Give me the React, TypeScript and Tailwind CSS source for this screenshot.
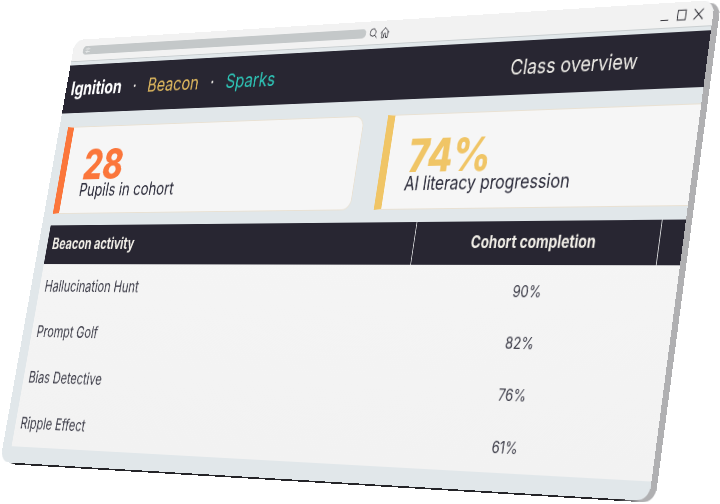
import { useLayoutEffect, useRef, useState } from "react";

type Point = [number, number];

// Corners of the tilted screen, clockwise from the top left, on a stage 720 units wide.
const STAGE_WIDTH = 720;
const FACE: Point[] = [
  [75, 40],
  [715, 0],
  [649, 501],
  [0, 462],
];
const DEPTH: Point = [6, 2];

// Projects a width x height box onto four corners.
function project(width: number, height: number, corners: Point[]): string {
  const [[x0, y0], [x1, y1], [x2, y2], [x3, y3]] = corners;
  const dx1 = x1 - x2;
  const dx2 = x3 - x2;
  const dx3 = x0 - x1 + x2 - x3;
  const dy1 = y1 - y2;
  const dy2 = y3 - y2;
  const dy3 = y0 - y1 + y2 - y3;
  const det = dx1 * dy2 - dx2 * dy1;
  const g = (dx3 * dy2 - dx2 * dy3) / det;
  const h = (dx1 * dy3 - dx3 * dy1) / det;
  const m = [
    (x1 - x0 + g * x1) / width, (y1 - y0 + g * y1) / width, 0, g / width,
    (x3 - x0 + h * x3) / height, (y3 - y0 + h * y3) / height, 0, h / height,
    0, 0, 1, 0,
    x0, y0, 0, 1,
  ];
  return `matrix3d(${m.map((n) => n.toFixed(8)).join(",")})`;
}

const stats = [
  { value: "28", label: "Pupils in cohort", accent: "border-l-[#fb763b]", color: "text-[#fb763b]" },
  { value: "74%", label: "AI literacy progression", accent: "border-l-[#f0c566]", color: "text-[#f0c566]" },
];

const activities = [
  { name: "Hallucination Hunt", completion: "90%" },
  { name: "Prompt Golf", completion: "82%" },
  { name: "Bias Detective", completion: "76%" },
  { name: "Ripple Effect", completion: "61%" },
];

const iconProps = {
  viewBox: "0 0 12 12",
  fill: "none",
  stroke: "currentColor",
  strokeLinecap: "round",
  strokeLinejoin: "round",
  "aria-hidden": true,
} as const;

function Toolbar() {
  return (
    <div className="flex h-[26px] items-center border-b border-[#c9ced0] bg-[#f2f2f2] pr-[11px] pl-4 text-[#33333a]">
      <label className="flex h-[10px] w-[424px] items-center rounded-full bg-[#c4c8c9] pl-1 text-[#eef0f0]">
        <svg {...iconProps} className="size-2">
          <path d="M1 3.5h4M8 3.5h3M1 8.5h2M6 8.5h5" />
          <circle cx="6.5" cy="3.5" r="1.3" />
          <circle cx="4.5" cy="8.5" r="1.3" />
        </svg>
        <input aria-label="Address" className="h-2 min-w-0 grow bg-transparent px-1 text-[8px] outline-none" />
      </label>
      <div className="flex items-center gap-1 pl-1">
        <button type="button" aria-label="Search">
          <svg {...iconProps} className="size-3">
            <circle cx="5.5" cy="5.2" r="4" />
            <path d="M8.4 8.2 11 11" />
          </svg>
        </button>
        <button type="button" aria-label="Home">
          <svg {...iconProps} className="size-3">
            <path d="M.6 6 6 .6 11.4 6M2 5v6.400h2.600V8.200a1.400 1.400 0 0 1 2.800 0v3.200H10V5" />
          </svg>
        </button>
      </div>
      <div className="ml-auto flex items-center gap-2">
        <button type="button" aria-label="Minimize">
          <svg {...iconProps} className="size-3">
            <path d="M2 10.500h8.500" strokeWidth="1.200" />
          </svg>
        </button>
        <button type="button" aria-label="Maximize">
          <svg {...iconProps} className="size-3">
            <path d="M1.500 1.200h9.500v9.800H1.500z" strokeWidth="1.100" />
          </svg>
        </button>
        <button type="button" aria-label="Close">
          <svg {...iconProps} className="size-3">
            <path d="m1 1.200 10 9.800M11 1.200 1 11" strokeWidth="1.100" />
          </svg>
        </button>
      </div>
    </div>
  );
}

function Header() {
  return (
    <header className="mt-1 flex h-14 items-center justify-between bg-[#282632] pr-[82px] pb-px pl-2 text-[22px] text-[#edebe6]">
      <nav className="flex items-center gap-[17px]">
        <a href="#ignition" className="font-bold text-white">Ignition</a>
        <span>·</span>
        <a href="#beacon" className="text-[#e0b95f]">Beacon</a>
        <span>·</span>
        <a href="#sparks" className="text-[#2ec4b6]">Sparks</a>
      </nav>
      <h1>Class overview</h1>
    </header>
  );
}

function Stats() {
  return (
    <section className="mt-4 flex gap-8 pl-[14px]">
      {stats.map((stat) => (
        <div
          key={stat.label}
          className={`flex h-[100px] w-[442px] shrink-0 flex-col rounded-r-xl border border-l-10 border-[#e9e1d3] bg-[#f6f6f6] pt-[23px] pl-[26px] ${stat.accent}`}
        >
          <p className={`text-5xl leading-[39px] font-extrabold ${stat.color}`}>{stat.value}</p>
          <p className="text-xl leading-5 text-[#2b2b3a]">{stat.label}</p>
        </div>
      ))}
    </section>
  );
}

function Activities() {
  return (
    <div className="mt-[13px] pl-[14px]">
      <table className="w-[1040px] table-fixed border-collapse bg-linear-to-b from-[#f5f5f5] to-[#f2f2f2] text-[17px] text-[#3d3d49]">
        <thead>
          <tr className="h-11 bg-[#282632] text-[#f1eee7]">
            <th scope="col" className="w-[534px] pl-2 text-left font-bold">Beacon activity</th>
            <th scope="col" className="w-[304px] border-x border-[#d5d6d8] text-center font-bold">Cohort completion</th>
            <td />
          </tr>
        </thead>
        <tbody>
          {activities.map((activity) => (
            <tr key={activity.name} className="h-[51px]">
              <td className="pl-2">{activity.name}</td>
              <td className="pl-1 text-center text-base">{activity.completion}</td>
              <td />
            </tr>
          ))}
        </tbody>
      </table>
    </div>
  );
}

export default function App() {
  const stage = useRef<HTMLElement>(null);
  const screen = useRef<HTMLDivElement>(null);
  const [tilt, setTilt] = useState({ face: "none", back: "none" });

  useLayoutEffect(() => {
    const update = () => {
      if (!stage.current || !screen.current) return;
      const { offsetWidth, offsetHeight } = screen.current;
      const scale = stage.current.clientWidth / STAGE_WIDTH;
      const face = FACE.map(([x, y]): Point => [x * scale, y * scale]);
      const back = FACE.map(([x, y]): Point => [(x + DEPTH[0]) * scale, (y + DEPTH[1]) * scale]);
      setTilt({
        face: project(offsetWidth, offsetHeight, face),
        back: project(offsetWidth, offsetHeight, back),
      });
    };
    update();
    const observer = new ResizeObserver(update);
    if (stage.current) observer.observe(stage.current);
    if (screen.current) observer.observe(screen.current);
    return () => observer.disconnect();
  }, []);

  return (
    <main
      ref={stage}
      className="grid aspect-10/7 w-full grid-cols-[880px] content-start overflow-hidden bg-white font-['Inter','Liberation_Sans',sans-serif]"
    >
      <div
        aria-hidden="true"
        className="col-start-1 row-start-1 origin-top-left rounded-[14px] bg-linear-to-r from-[#242428] from-95% to-[#b0b0b2] to-98%"
        style={{ transform: tilt.back }}
      />
      <div
        ref={screen}
        className="col-start-1 row-start-1 origin-top-left overflow-hidden rounded-[14px] bg-[#e1e7ea] pb-[18px]"
        style={{ transform: tilt.face }}
      >
        <Toolbar />
        <Header />
        <Stats />
        <Activities />
      </div>
    </main>
  );
}
